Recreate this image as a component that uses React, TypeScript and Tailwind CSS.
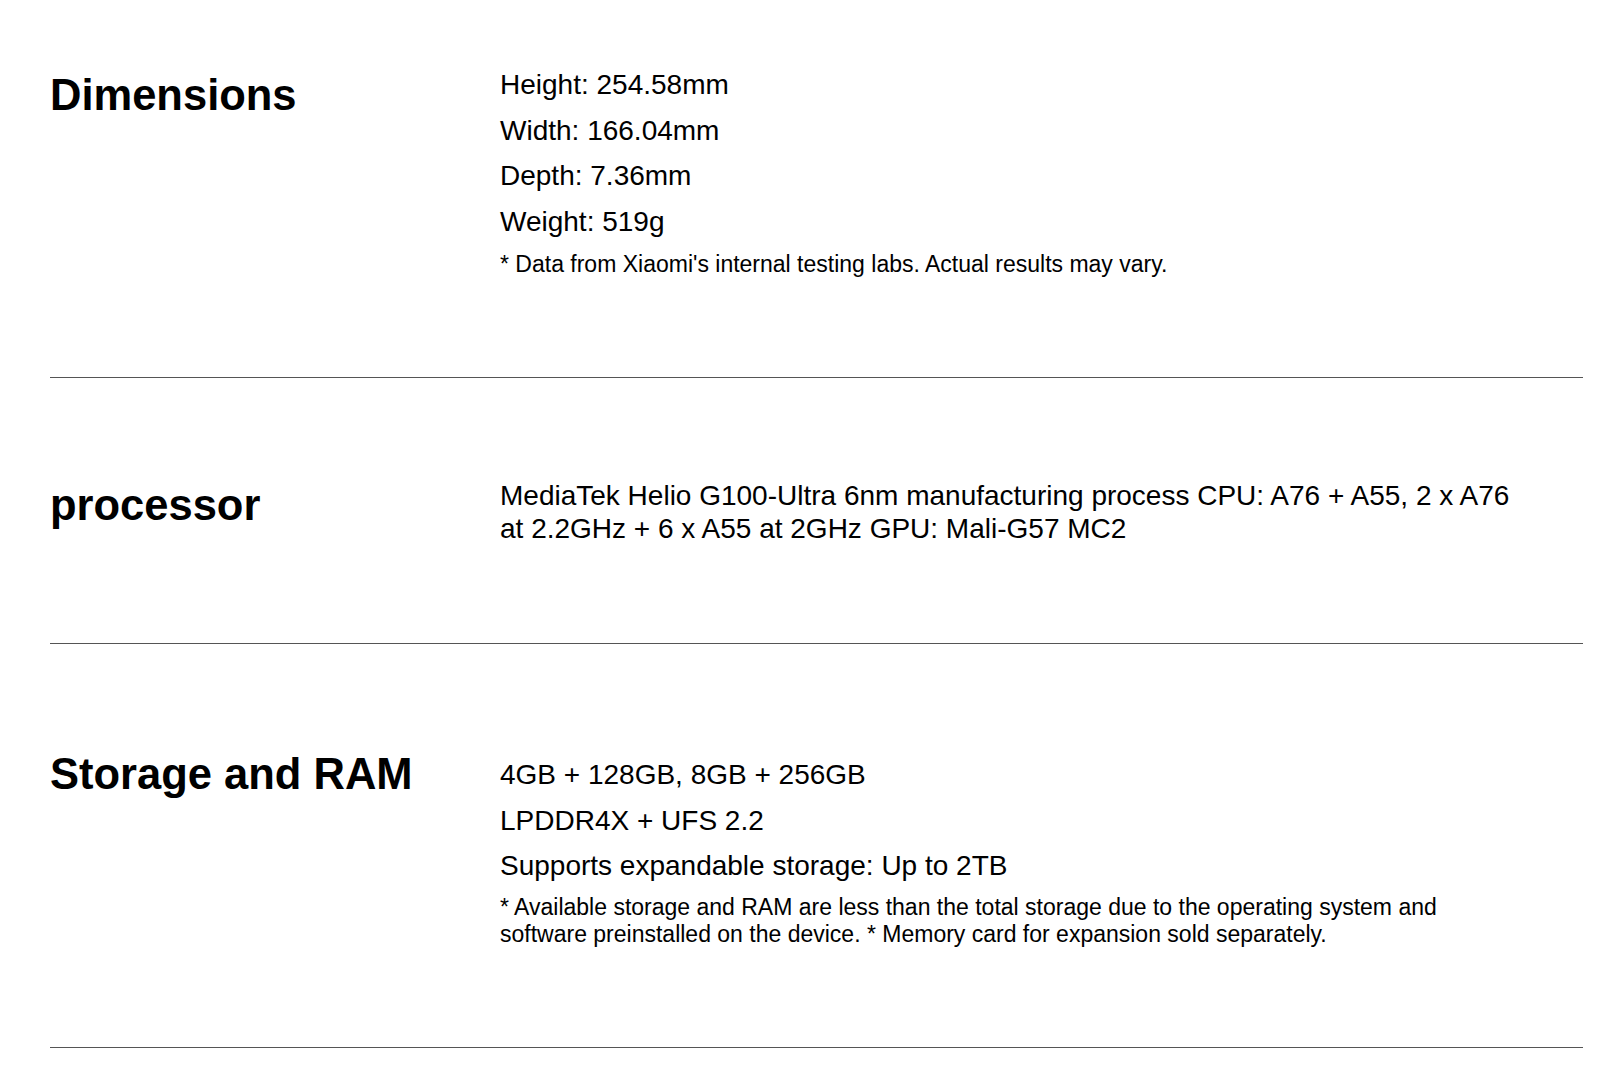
const font = { fontFamily: '"Liberation Sans", Arial, sans-serif' };

function SpecLine({ children }: { children: React.ReactNode }) {
  return <p className="text-[28px] leading-[45.5px] text-black">{children}</p>;
}

function Note({ children, tight }: { children: React.ReactNode; tight?: boolean }) {
  return (
    <p className={`${tight ? "mt-[5px]" : "mt-[7px]"} max-w-[990px] text-[23px] leading-[27px] text-black`}>
      {children}
    </p>
  );
}

export default function App() {
  return (
    <div className="min-h-screen bg-white" style={font}>
      <div className="ml-[50px] w-[1533px]">
        {/* Dimensions */}
        <section className="flex items-start border-b border-[#555] pt-[62px] pb-[99px]">
          <h2 className="mt-[7px] w-[450px] shrink-0 text-[43.5px] font-bold leading-[1.2] text-black">
            Dimensions
          </h2>
          <div>
            <SpecLine>Height: 254.58mm</SpecLine>
            <SpecLine>Width: 166.04mm</SpecLine>
            <SpecLine>Depth: 7.36mm</SpecLine>
            <SpecLine>Weight: 519g</SpecLine>
            <Note>* Data from Xiaomi's internal testing labs. Actual results may vary.</Note>
          </div>
        </section>

        {/* processor */}
        <section className="flex items-start border-b border-[#555] pt-[93px] pb-[98px]">
          <h2 className="mt-[8px] w-[450px] shrink-0 text-[43.5px] font-bold leading-[1.2] text-black">
            processor
          </h2>
          <p className="mt-[8px] w-[1040px] text-[28px] leading-[33px] text-black">
            MediaTek Helio G100-Ultra 6nm manufacturing process CPU: A76 + A55, 2 x A76 at 2.2GHz
            + 6 x A55 at 2GHz GPU: Mali-G57 MC2
          </p>
        </section>

        {/* Storage and RAM */}
        <section className="flex items-start border-b border-[#555] pt-[104px] pb-[99px]">
          <h2 className="w-[450px] shrink-0 text-[43.5px] font-bold leading-[1.2] text-black">
            Storage and RAM
          </h2>
          <div className="mt-[4px]">
            <SpecLine>4GB + 128GB, 8GB + 256GB</SpecLine>
            <SpecLine>LPDDR4X + UFS 2.2</SpecLine>
            <SpecLine>Supports expandable storage: Up to 2TB</SpecLine>
            <Note tight>
              * Available storage and RAM are less than the total storage due to the operating
              system and software preinstalled on the device. * Memory card for expansion sold
              separately.
            </Note>
          </div>
        </section>
      </div>
    </div>
  );
}
